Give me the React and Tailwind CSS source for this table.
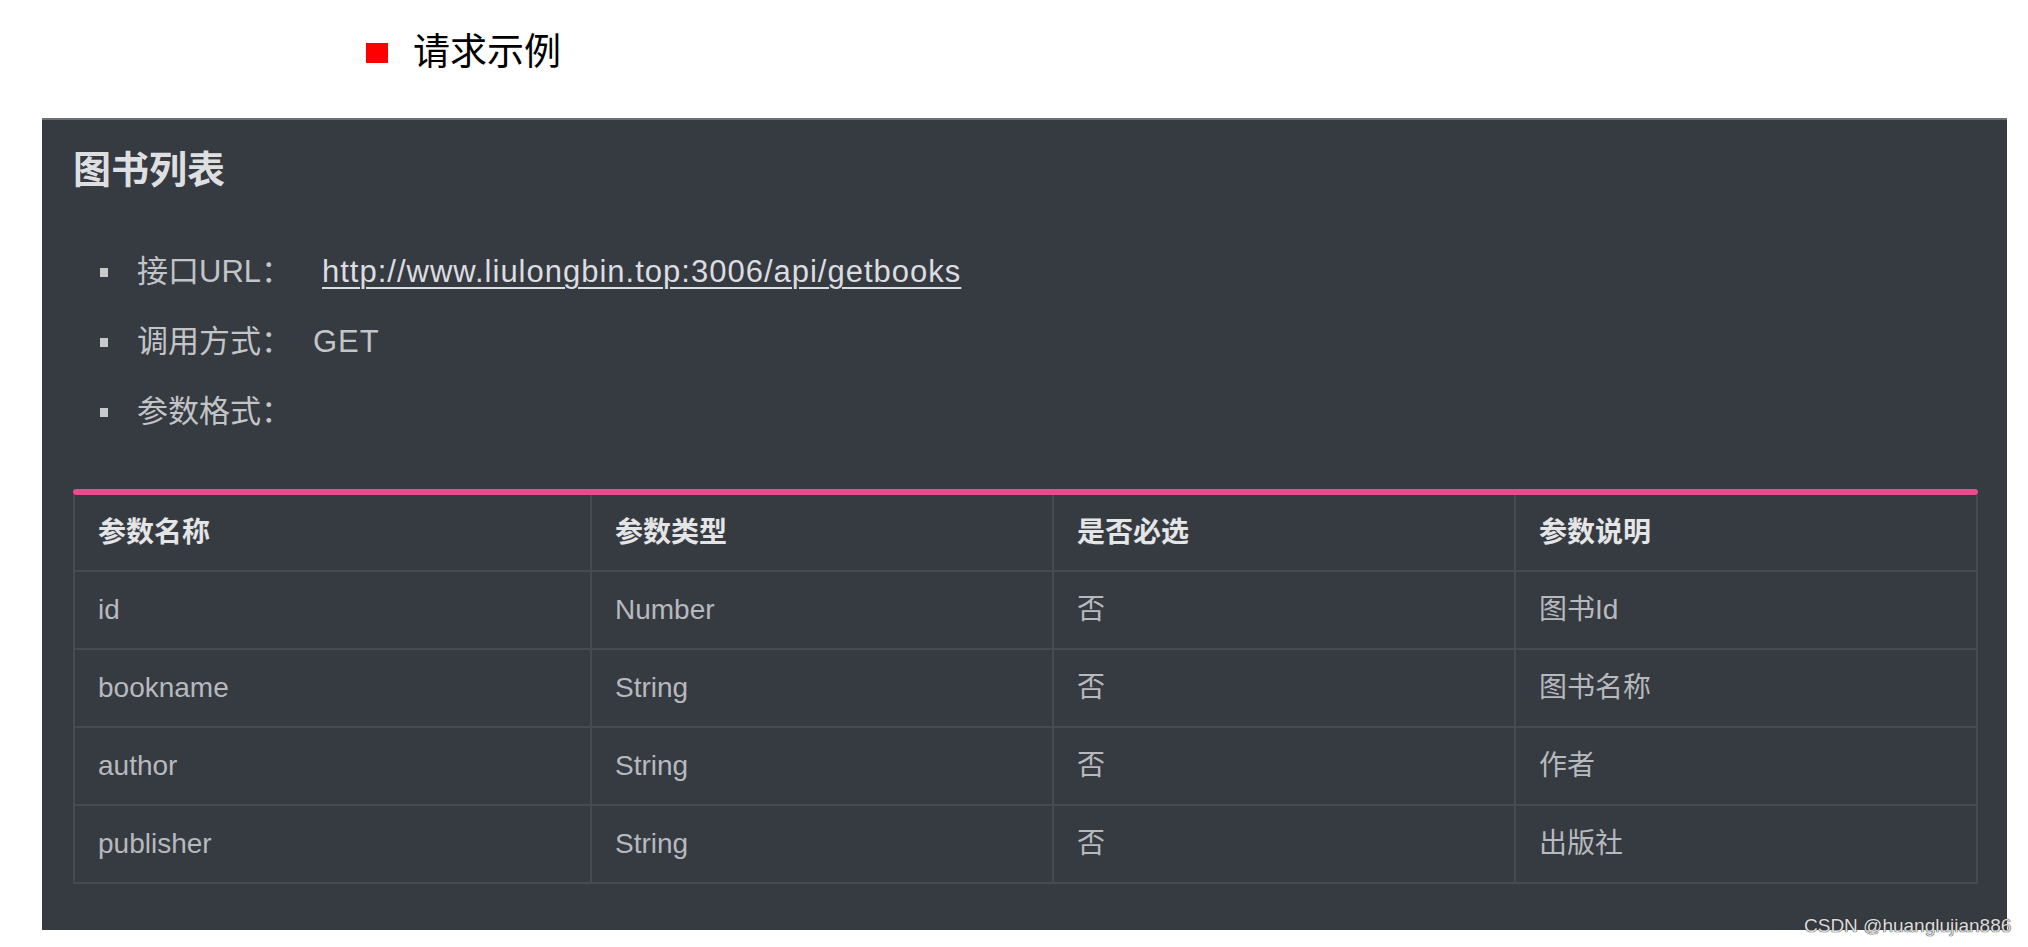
export default function App() {
  const rows = [
    ["id", "Number", "否", "图书Id"],
    ["bookname", "String", "否", "图书名称"],
    ["author", "String", "否", "作者"],
    ["publisher", "String", "否", "出版社"],
  ];
  const heads = ["参数名称", "参数类型", "是否必选", "参数说明"];
  return (
    <div className="relative w-[2028px] h-[947px] bg-white overflow-hidden font-['Liberation_Sans','Noto_Sans_CJK_SC',sans-serif]">
      {/* section heading */}
      <div className="h-[118px] flex items-center pl-[366px] pb-[12px]">
        <span className="w-[22px] h-[20px] bg-[#ff0000]" />
        <span className="ml-[25px] text-[37px] leading-[44px] text-black">请求示例</span>
      </div>

      {/* dark panel */}
      <div className="ml-[42px] w-[1965px] h-[812px] bg-[#363a41] border-t-2 border-[#6c6f73] pl-[31px] pr-[29px] pt-[28px]">
        <div className="text-[38px] leading-[44px] font-bold text-[#dedfe0]">图书列表</div>

        <ul className="mt-[45px]">
          <li className="h-[70px] flex items-center pl-[27px] text-[31px] text-[#c2c4c7]">
            <span className="w-[8px] h-[9px] bg-[#c8cacc]" />
            <span className="ml-[29px] w-[185px]">接口URL：</span>
            <span className="underline underline-offset-[5px] decoration-2 tracking-[1px] text-[#dcdde0]">
              http://www.liulongbin.top:3006/api/getbooks
            </span>
          </li>
          <li className="h-[70px] flex items-center pl-[27px] text-[31px] text-[#c2c4c7]">
            <span className="w-[8px] h-[9px] bg-[#c8cacc]" />
            <span className="ml-[29px] w-[176px]">调用方式：</span>
            <span className="tracking-[1px]">GET</span>
          </li>
          <li className="h-[70px] flex items-center pl-[27px] text-[31px] text-[#c2c4c7]">
            <span className="w-[8px] h-[9px] bg-[#c8cacc]" />
            <span className="ml-[29px]">参数格式：</span>
          </li>
        </ul>

        {/* table */}
        <div className="mt-[42px]">
          <div className="h-[6px] rounded-[3px] bg-[#e84b8e]" />
          <div className="grid grid-cols-[517px_462px_462px_462px] border-l-2 border-[#464b52]">
            {heads.map((h) => (
              <div
                key={h}
                className="h-[77px] flex items-center pl-[23px] border-r-2 border-b-2 border-[#464b52] text-[28px] font-bold text-[#e4e5e6]"
              >
                {h}
              </div>
            ))}
            {rows.map((r, i) =>
              r.map((c, j) => (
                <div
                  key={i + "-" + j}
                  className="h-[78px] flex items-center pl-[23px] border-r-2 border-b-2 border-[#464b52] text-[28px] text-[#b6b9bd]"
                >
                  {c}
                </div>
              ))
            )}
          </div>
        </div>
      </div>

      {/* watermark */}
      <div className="absolute left-[1804px] top-[914px] text-[19px] leading-[24px] text-[#dcdcdc] [text-shadow:0_0_1px_#2a2a2a,0_0_1px_#2a2a2a]">
        CSDN @huanglujian886
      </div>
    </div>
  );
}
